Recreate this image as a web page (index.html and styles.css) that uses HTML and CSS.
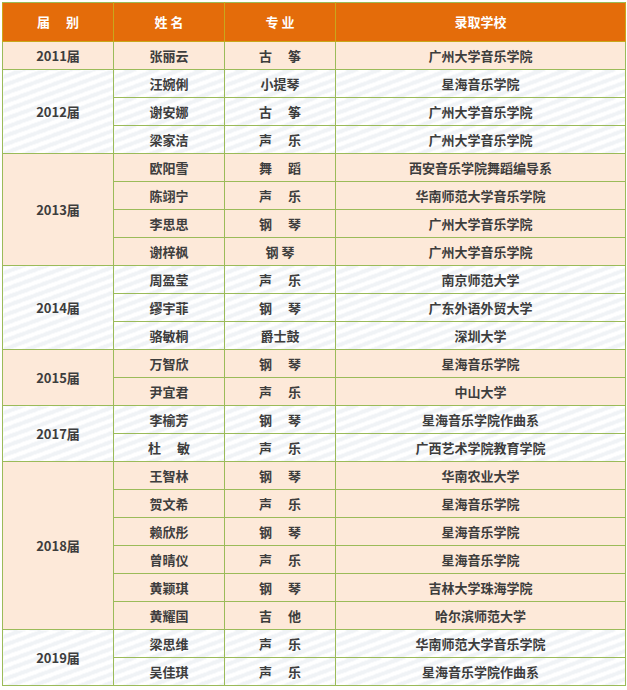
FILE: index.html
```html
<!DOCTYPE html>
<html lang="zh">
<head>
<meta charset="utf-8">
<title>录取名单</title>
<link rel="stylesheet" href="styles.css">
</head>
<body>
<table class="roster">
  <colgroup>
    <col class="c-year"><col class="c-name"><col class="c-major"><col class="c-school">
  </colgroup>
  <thead>
    <tr><th>届　 别</th><th>姓 名</th><th>专 业</th><th>录取学校</th></tr>
  </thead>
  <tbody class="peach">
    <tr><td>2011届</td><td>张丽云</td><td>古　 筝</td><td>广州大学音乐学院</td></tr>
  </tbody>
  <tbody class="stripe">
    <tr><td rowspan="3">2012届</td><td>汪婉俐</td><td>小提琴</td><td>星海音乐学院</td></tr>
    <tr><td>谢安娜</td><td>古　 筝</td><td>广州大学音乐学院</td></tr>
    <tr><td>梁家洁</td><td>声　 乐</td><td>广州大学音乐学院</td></tr>
  </tbody>
  <tbody class="peach">
    <tr><td rowspan="4">2013届</td><td>欧阳雪</td><td>舞　 蹈</td><td>西安音乐学院舞蹈编导系</td></tr>
    <tr><td>陈翊宁</td><td>声　 乐</td><td>华南师范大学音乐学院</td></tr>
    <tr><td>李思思</td><td>钢　 琴</td><td>广州大学音乐学院</td></tr>
    <tr><td>谢梓枫</td><td>钢 琴</td><td>广州大学音乐学院</td></tr>
  </tbody>
  <tbody class="stripe">
    <tr><td rowspan="3">2014届</td><td>周盈莹</td><td>声　 乐</td><td>南京师范大学</td></tr>
    <tr><td>缪宇菲</td><td>钢　 琴</td><td>广东外语外贸大学</td></tr>
    <tr><td>骆敏桐</td><td>爵士鼓</td><td>深圳大学</td></tr>
  </tbody>
  <tbody class="peach">
    <tr><td rowspan="2">2015届</td><td>万智欣</td><td>钢　 琴</td><td>星海音乐学院</td></tr>
    <tr><td>尹宜君</td><td>声　 乐</td><td>中山大学</td></tr>
  </tbody>
  <tbody class="stripe">
    <tr><td rowspan="2">2017届</td><td>李榆芳</td><td>钢　 琴</td><td>星海音乐学院作曲系</td></tr>
    <tr><td>杜　 敏</td><td>声　 乐</td><td>广西艺术学院教育学院</td></tr>
  </tbody>
  <tbody class="peach">
    <tr><td rowspan="6">2018届</td><td>王智林</td><td>钢　 琴</td><td>华南农业大学</td></tr>
    <tr><td>贺文希</td><td>声　 乐</td><td>星海音乐学院</td></tr>
    <tr><td>赖欣彤</td><td>钢　 琴</td><td>星海音乐学院</td></tr>
    <tr><td>曾晴仪</td><td>声　 乐</td><td>星海音乐学院</td></tr>
    <tr><td>黄颖琪</td><td>钢　 琴</td><td>吉林大学珠海学院</td></tr>
    <tr><td>黄耀国</td><td>吉　 他</td><td>哈尔滨师范大学</td></tr>
  </tbody>
  <tbody class="stripe">
    <tr><td rowspan="2">2019届</td><td>梁思维</td><td>声　 乐</td><td>华南师范大学音乐学院</td></tr>
    <tr><td>吴佳琪</td><td>声　 乐</td><td>星海音乐学院作曲系</td></tr>
  </tbody>
</table>
</body>
</html>
```

FILE: styles.css
```css
html, body {
  margin: 0;
  padding: 0;
  background: #ffffff;
}

body {
  padding: 2px;
  font-family: "Noto Sans CJK SC", "DejaVu Sans", sans-serif;
}

.roster {
  border-collapse: collapse;
  table-layout: fixed;
  width: 623px;
  border: 1px solid #9bbb59;
  font-size: 13px;
  font-weight: 700;
  color: #3d3d3d;
}

.c-year { width: 111px; }
.c-name { width: 111px; }
.c-major { width: 111px; }
.c-school { width: 290px; }

.roster th,
.roster td {
  border: 1px solid #9bbb59;
  padding: 0;
  text-align: center;
  vertical-align: middle;
  line-height: 16px;
}

.roster th {
  height: 38px;
  background: #e46c0a;
  color: #ffffff;
  border-color: #c9a71c;
  border-top-color: #9bbb59;
}

.roster td {
  height: 27px;
}

.peach td {
  background: #fde9d9;
}

.stripe td {
  background-color: #ffffff;
  background-image: repeating-linear-gradient(160deg, #ffffff 0 4px, #f0f3f6 4px 8px);
}
```
